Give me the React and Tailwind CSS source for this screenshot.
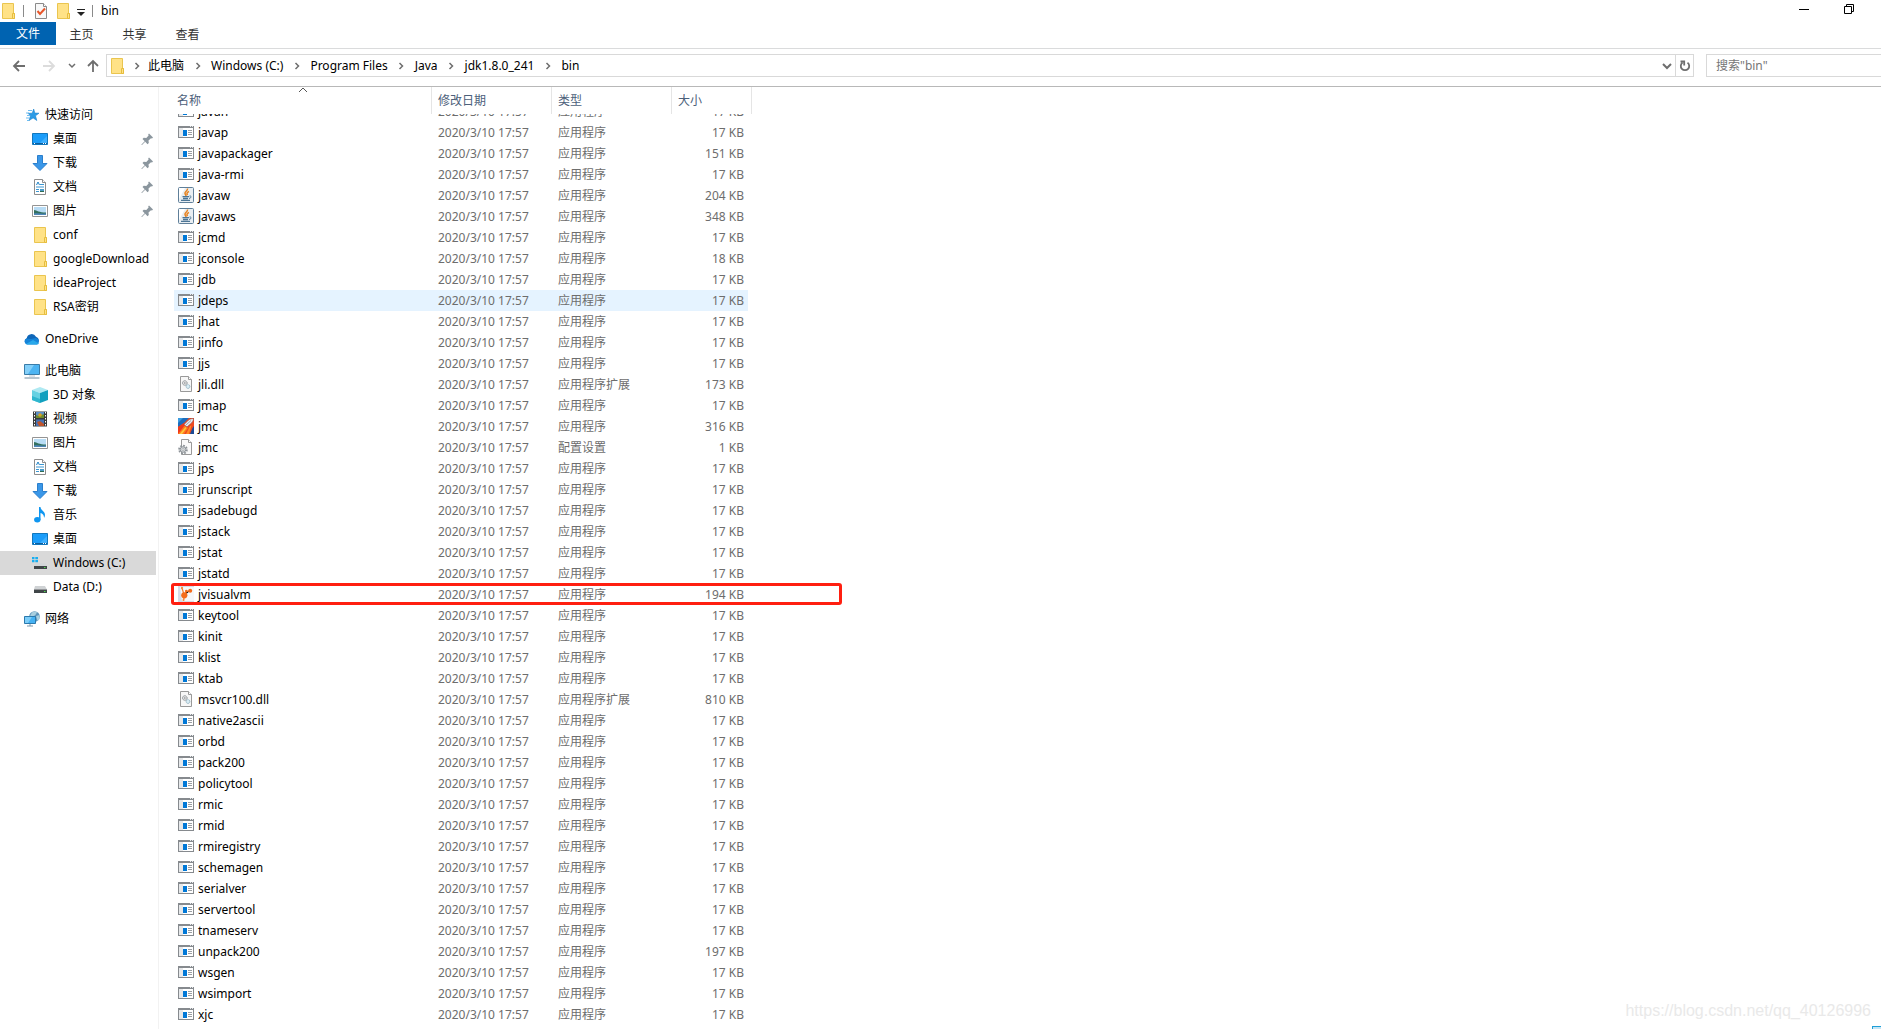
import { useState } from "react";
import clsx from "clsx";

const DATE = "2020/3/10 17:57";

const TYPES = {
  app: "应用程序",
  java: "应用程序",
  jmc: "应用程序",
  visualvm: "应用程序",
  dll: "应用程序扩展",
  config: "配置设置",
};

const files = [
  { name: "javah", icon: "app", size: 17, clipped: true },
  { name: "javap", icon: "app", size: 17 },
  { name: "javapackager", icon: "app", size: 151 },
  { name: "java-rmi", icon: "app", size: 17 },
  { name: "javaw", icon: "java", size: 204 },
  { name: "javaws", icon: "java", size: 348 },
  { name: "jcmd", icon: "app", size: 17 },
  { name: "jconsole", icon: "app", size: 18 },
  { name: "jdb", icon: "app", size: 17 },
  { name: "jdeps", icon: "app", size: 17, hovered: true },
  { name: "jhat", icon: "app", size: 17 },
  { name: "jinfo", icon: "app", size: 17 },
  { name: "jjs", icon: "app", size: 17 },
  { name: "jli.dll", icon: "dll", size: 173 },
  { name: "jmap", icon: "app", size: 17 },
  { name: "jmc", icon: "jmc", size: 316 },
  { name: "jmc", icon: "config", size: 1 },
  { name: "jps", icon: "app", size: 17 },
  { name: "jrunscript", icon: "app", size: 17 },
  { name: "jsadebugd", icon: "app", size: 17 },
  { name: "jstack", icon: "app", size: 17 },
  { name: "jstat", icon: "app", size: 17 },
  { name: "jstatd", icon: "app", size: 17 },
  { name: "jvisualvm", icon: "visualvm", size: 194, marked: true },
  { name: "keytool", icon: "app", size: 17 },
  { name: "kinit", icon: "app", size: 17 },
  { name: "klist", icon: "app", size: 17 },
  { name: "ktab", icon: "app", size: 17 },
  { name: "msvcr100.dll", icon: "dll", size: 810 },
  { name: "native2ascii", icon: "app", size: 17 },
  { name: "orbd", icon: "app", size: 17 },
  { name: "pack200", icon: "app", size: 17 },
  { name: "policytool", icon: "app", size: 17 },
  { name: "rmic", icon: "app", size: 17 },
  { name: "rmid", icon: "app", size: 17 },
  { name: "rmiregistry", icon: "app", size: 17 },
  { name: "schemagen", icon: "app", size: 17 },
  { name: "serialver", icon: "app", size: 17 },
  { name: "servertool", icon: "app", size: 17 },
  { name: "tnameserv", icon: "app", size: 17 },
  { name: "unpack200", icon: "app", size: 197 },
  { name: "wsgen", icon: "app", size: 17 },
  { name: "wsimport", icon: "app", size: 17 },
  { name: "xjc", icon: "app", size: 17 },
];

const navGroups = [
  {
    label: "快速访问",
    icon: "star",
    items: [
      { label: "桌面", icon: "desktop", pinned: true },
      { label: "下载", icon: "download", pinned: true },
      { label: "文档", icon: "document", pinned: true },
      { label: "图片", icon: "picture", pinned: true },
      { label: "conf", icon: "folder" },
      { label: "googleDownload", icon: "folder" },
      { label: "ideaProject", icon: "folder" },
      { label: "RSA密钥", icon: "folder" },
    ],
  },
  { label: "OneDrive", icon: "cloud", items: [] },
  {
    label: "此电脑",
    icon: "computer",
    items: [
      { label: "3D 对象", icon: "cube" },
      { label: "视频", icon: "video" },
      { label: "图片", icon: "picture" },
      { label: "文档", icon: "document" },
      { label: "下载", icon: "download" },
      { label: "音乐", icon: "music" },
      { label: "桌面", icon: "desktop" },
      { label: "Windows (C:)", icon: "systemDrive", selected: true },
      { label: "Data (D:)", icon: "drive" },
    ],
  },
  { label: "网络", icon: "network", items: [] },
];

const crumbs = [
  "此电脑",
  "Windows (C:)",
  "Program Files",
  "Java",
  "jdk1.8.0_241",
  "bin",
];

// All drawings are on a 16x16 grid
const drawings = {
  folder: (
    <>
      <path d="M2.5.5h11v10h1v5h-12z" fill="#ffe287" stroke="#eac54f" />
      <path d="M12.5 10.5h2v5h-2z" fill="#ffe287" stroke="#e6bd3e" />
    </>
  ),
  app: (
    <g shapeRendering="crispEdges">
      <path d="M0 2h16v12H0z" fill="#868a8e" />
      <path d="M1 4h14v9H1z" fill="#fff" />
      <path d="M1 4h4v9H1z" fill="#e6e8ea" />
      <path d="M5 6h4v6H5z" fill="#0078d7" />
      <path d="M10 6h4v1h-4zM10 8h4v1h-4zM10 10h4v1h-4z" fill="#9a9ea2" />
      <path d="M12 2h1v1h-1zM14 2h1v1h-1z" fill="#e6e8ea" />
    </g>
  ),
  java: (
    <>
      <rect x=".5" y=".5" width="15" height="15" rx="1" fill="#e9eef2" stroke="#5f7f99" />
      <path d="M1 1h6L1 12z" fill="#fff" />
      <path d="M9.500 1.500c.5 2.500-3 3-2.500 5 .2.900 1 1.500 1 2.500M11 4.500c-2 .9-2.700 1.900-1.400 3.500" fill="none" stroke="#e8821e" strokeWidth="1.500" />
      <path d="M4.500 9.700h6.500M5 11.500h5M3 13.400h9" stroke="#4c7595" strokeWidth="1.300" />
      <path d="M11.500 9c2-.4 2.400 1.800-.5 2.500" fill="none" stroke="#4c7595" />
    </>
  ),
  dll: (
    <>
      <path d="M2.500.5h8l3 3v12h-11z" fill="#f7f7f7" stroke="#999" />
      <path d="M10.500.5v3h3" fill="#fff" stroke="#999" />
      <circle cx="6.800" cy="7" r="2.300" fill="#e2e2e2" stroke="#858b90" strokeDasharray="1.200 .5" />
      <circle cx="6.800" cy="7" r=".8" fill="#858b90" />
      <circle cx="10" cy="10.500" r="1.900" fill="#d9edf5" stroke="#87a9b9" strokeDasharray="1 .5" />
    </>
  ),
  config: (
    <>
      <path d="M3.500.5h7l3 3v12h-10z" fill="#fafafa" stroke="#999" />
      <path d="M10.500.5v3h3" fill="#fff" stroke="#999" />
      <circle cx="5" cy="10.500" r="3.900" fill="none" stroke="#8e9499" strokeWidth="1.800" strokeDasharray="1.800 1.200" />
      <circle cx="5" cy="10.500" r="2.800" fill="#d5d8da" stroke="#8e9499" />
      <circle cx="5" cy="10.500" r="1" fill="#fff" stroke="#8e9499" strokeWidth=".6" />
    </>
  ),
  jmc: (
    <>
      <path d="M0 0h16v16H0z" fill="#ee4a1e" />
      <path d="M0 0h11L6 5 0 9z" fill="#1d6dbd" />
      <path d="M0 0h5L0 5z" fill="#3b9ce0" />
      <path d="M12 16l2.500-6L16 8v8z" fill="#1b4b96" />
      <path d="M0 9l6-4 2 2-8 9z" fill="#f0391c" />
      <path d="M0 16l7-9 3 3-4 6z" fill="#ff7a1c" />
      <path d="M1.500 16l6-7 1 1-4.500 6z" fill="#ffc93c" />
      <path d="M8 16l4-8 1.500-.5L11 16z" fill="#ff8a24" />
      <path d="M6 6.500L10.500 2C12 1 13.500.5 15.500.5 15.500 2 15 3.500 13.500 5L9 9z" fill="#e8ebef" stroke="#8b3b3b" strokeWidth=".6" />
      <path d="M8 7l5-4.500" stroke="#9aa5b3" />
    </>
  ),
  visualvm: (
    <>
      <path d="M0 0h16v16H0z" fill="#d5dde8" />
      <path d="M2 1h14v14H4z" fill="#f6f7f9" />
      <path d="M6.300 9.500L4 2M6.300 9.500l2-4 4-.8M6.300 10l-.8 4.500" stroke="#f47b2a" strokeWidth="1.200" />
      <circle cx="6.300" cy="9.300" r="3.100" fill="#f46c1b" />
      <circle cx="12.200" cy="4.800" r="2" fill="#f46c1b" />
      <circle cx="8.300" cy="5" r="1.300" fill="#f46c1b" />
      <circle cx="4" cy="2" r="1.200" fill="#f58b45" />
      <circle cx="5.500" cy="14" r="1" fill="#f58b45" />
    </>
  ),
  star: (
    <>
      <path d="M9.700 2l1.100 4.100 4.200.1-3.500 2.600 1.300 4.700-3.700-2.600-4.100 2.700 1.500-4.800L4 6.300l4.200-.1z" fill="#2b9be6" stroke="#1a83cf" strokeWidth=".6" />
      <path d="M4 3.500h4M2 6h3M3 8.500h3M2 11h3.500M3 13.500h2" stroke="#6cbcf0" />
    </>
  ),
  desktop: (
    <>
      <path d="M.5 2.500h15v11H.5z" fill="#1b9dfa" stroke="#1277bd" />
      <path d="M8 12L15 5v7z" fill="#3eb0ff" />
      <path d="M1 12.500h14" stroke="#0d5e9c" />
      <path d="M2 12.500h1M11 12.500h1M13 12.500h1" stroke="#fff" />
    </>
  ),
  download: (
    <path d="M5.500.5h5v8h4.500L8 15.500 1 8.500h4.500z" fill="#3a97e8" stroke="#2b7fcc" />
  ),
  document: (
    <>
      <path d="M2.500.5h8l3 3v12h-11z" fill="#fff" stroke="#8d8d8d" />
      <path d="M10.500.5v3h3" fill="#fff" stroke="#8d8d8d" />
      <path d="M4.500 6l1.500-3 1.500 3" fill="none" stroke="#2384c6" />
      <path d="M8 5.500h4M4 8h8M4 10.500h3M4 12.500h3" stroke="#3c97d2" />
      <path d="M8 10h4v3H8z" fill="#4c9cc9" />
      <path d="M8 12h4v1H8z" fill="#2f6b52" />
    </>
  ),
  picture: (
    <>
      <path d="M.5 2.500h15v11H.5z" fill="#fff" stroke="#949494" />
      <path d="M2 4h12v8H2z" fill="#b8dcf5" />
      <path d="M2 7c3 .5 5 2.500 12 2.500V12H2z" fill="#33705f" />
      <path d="M2 10.500c5-.5 8 .5 12 0V12H2z" fill="#4f86b9" />
    </>
  ),
  cloud: (
    <>
      <path d="M3 13a3 3 0 0 1-.3-5.700A5 5 0 0 1 12 5.700 4 4 0 0 1 13 13z" fill="#0f66b8" />
      <path d="M3 13.500A3.200 3.200 0 0 1 2.300 7.500L7 8l5-1a3.500 3.500 0 0 1 1 6.500z" fill="#1583d8" />
      <path d="M2 13l7-4 6 3.500c-.5.700-1.200 1-2 1H3z" fill="#28a8ea" />
    </>
  ),
  computer: (
    <>
      <path d="M.5 1.500h15v10H.5z" fill="#4cb4f2" stroke="#3a7ca8" />
      <path d="M1 2h9l-6 9H1z" fill="#83cff9" />
      <path d="M.5 15h15" stroke="#6f8ba0" />
      <path d="M5 13h6" stroke="#b9c7d1" />
    </>
  ),
  cube: (
    <>
      <path d="M8 0l8 3-8 3-8-3z" fill="#aee9f2" />
      <path d="M0 3l8 3v10l-8-3z" fill="#66d1e2" />
      <path d="M16 3L8 6v10l8-3z" fill="#12a0bf" />
      <path d="M0 9l8 3v4l-8-3z" fill="#2fb6ce" />
    </>
  ),
  video: (
    <>
      <path d="M1 .5h14v15H1z" fill="#3a3a3a" />
      <path d="M4 1h8v6H4z" fill="#5b8fc7" />
      <path d="M4 8.500h8V15H4z" fill="#4672b4" />
      <path d="M4 4l3 1 5-2v4H4z" fill="#6b8a2e" />
      <circle cx="8" cy="4" r="1.800" fill="#d8a21e" />
      <path d="M5 11l3-1 4 3v2H7z" fill="#c0542b" />
      <path d="M2.500 1v14M13.500 1v14" stroke="#fff" strokeDasharray="1.500 1.500" />
    </>
  ),
  music: (
    <>
      <path d="M7 0h1.500c.3 3.500 4.500 4 4.500 8 0 1.200-.4 2-1 3 .2-3-1.500-4.500-3.500-5v7H7z" fill="#0f96f0" />
      <ellipse cx="5.300" cy="12.800" rx="3.200" ry="2.700" fill="#0f96f0" />
    </>
  ),
  systemDrive: (
    <>
      <path d="M0 2h2.500v2.200H0zM3.300 2H6v2.200H3.300zM0 5h2.500v2.200H0zM3.300 5H6v2.200H3.300z" fill="#19aef0" />
      <path d="M3 8h10l2 3H2z" fill="#d3d6d8" />
      <path d="M2 11h13v3H2z" fill="#404548" />
      <path d="M12 12h1.500v1H12z" fill="#4be04b" />
    </>
  ),
  drive: (
    <>
      <path d="M3 7h10l2 3.500H2z" fill="#cfd2d4" />
      <path d="M2 10.500h13v3.500H2z" fill="#404548" />
      <path d="M12 12h1.500v1H12z" fill="#4be04b" />
    </>
  ),
  network: (
    <>
      <circle cx="10.500" cy="5.500" r="5.300" fill="#5d93b8" />
      <path d="M8 1.500c2-1.500 4-1 5 0l-2 3-3 1-2-1zM12 5l3.500-1v4l-2 2z" fill="#a9cfdf" />
      <path d="M.5 5.500h11v7H.5z" fill="#45b1f2" stroke="#2b79ad" />
      <path d="M1 6h7l-4 6H1z" fill="#7dcdf8" />
      <path d="M3 15h6M6 13v2" stroke="#7d98ab" />
    </>
  ),
  checked: (
    <>
      <path d="M2.500.5h8l3 3v12h-11z" fill="#f8f8f8" stroke="#8a8a8a" />
      <path d="M10.500.5v3h3" fill="#fff" stroke="#8a8a8a" />
      <path d="M4.500 8l2.500 3 5-5.500" fill="none" stroke="#e8562a" strokeWidth="2" />
    </>
  ),
  pin: (
    <path d="M10 2.500l4 4-1 1-1-.3-2.500 2.300.3 2.500-1.300 1.200-2.300-2.400L3 14H2.500v-.5l3.200-3.200L3.500 8l1.200-1.300 2.600.3L9.600 4.500 9.200 3.400z" fill="#8b969e" />
  ),
  back: (
    <path d="M14 8H3M8 3L3 8l5 5" fill="none" stroke="currentColor" strokeWidth="1.800" />
  ),
  forward: (
    <path d="M2 8h11M8 3l5 5-5 5" fill="none" stroke="currentColor" strokeWidth="1.800" />
  ),
  up: (
    <path d="M8 14V3M3 8l5-5 5 5" fill="none" stroke="currentColor" strokeWidth="1.800" />
  ),
  chevronDown: (
    <path d="M4 6l4 4 4-4" fill="none" stroke="currentColor" strokeWidth="2" />
  ),
  smallDown: (
    <path d="M5 6l3 3 3-3" fill="none" stroke="currentColor" strokeWidth="1.500" />
  ),
  chevronRight: (
    <path d="M6.500 5l3 3-3 3" fill="none" stroke="currentColor" strokeWidth="1.500" />
  ),
  refresh: (
    <path d="M10.500 4.600A4.200 4.200 0 1 1 5.500 4.600M3.500 3.500h3.700v4" fill="none" stroke="currentColor" strokeWidth="1.800" />
  ),
  customize: (
    <path d="M4 6h8v1H4zM4 9h8l-4 4z" fill="#222" />
  ),
  sort: <path d="M4 7l4-4 4 4" fill="none" stroke="#555" />,
  minimize: <path d="M3 8.500h10" stroke="#000" />,
  restore: (
    <path d="M3.500 5.500h7v7h-7zM5.500 5.500v-2h7v7h-2" fill="none" stroke="#000" />
  ),
};

const Icon = ({ name }) => (
  <svg viewBox="0 0 16 16" className="size-4 shrink-0" aria-hidden="true">
    {drawings[name]}
  </svg>
);

const TitleBar = () => (
  <header className="flex h-[22px] items-center">
    <Icon name="folder" />
    <span className="ml-[7px] h-3 w-px bg-[#8a8a8a]" />
    <button type="button" aria-label="属性" className="ml-[9px]">
      <Icon name="checked" />
    </button>
    <button type="button" aria-label="新建文件夹" className="ml-[6px]">
      <Icon name="folder" />
    </button>
    <button type="button" aria-label="自定义快速访问工具栏" className="ml-[2px]">
      <Icon name="customize" />
    </button>
    <span className="ml-[3px] h-3 w-px bg-[#8a8a8a]" />
    <h1 className="ml-2 flex-1">bin</h1>
    <div className="flex gap-[29px] pr-6 pb-1">
      <button type="button" aria-label="最小化">
        <Icon name="minimize" />
      </button>
      <button type="button" aria-label="还原">
        <Icon name="restore" />
      </button>
    </div>
  </header>
);

const RibbonTabs = () => (
  <nav className="flex h-[27px] border-b border-[#dadbdc] pb-[3px]">
    <button type="button" className="w-14 bg-[#0063b1] text-white">
      文件
    </button>
    {["主页", "共享", "查看"].map((tab) => (
      <button key={tab} type="button" className="w-[53px] pt-[2px] pr-[2px] text-[#333]">
        {tab}
      </button>
    ))}
  </nav>
);

const AddressBar = () => {
  const [query, setQuery] = useState("");

  return (
    <div className="flex h-[38px] items-center border-b border-[#b8b8b8] pt-px pb-[5px] text-[#6e6e6e]">
      <div className="flex w-[106px] items-center pl-[11px]">
        <button type="button" aria-label="后退">
          <Icon name="back" />
        </button>
        <button type="button" aria-label="前进" className="ml-[14px] text-[#dcdcdc]">
          <Icon name="forward" />
        </button>
        <button type="button" aria-label="最近浏览的位置" className="ml-[7px]">
          <Icon name="smallDown" />
        </button>
        <button type="button" aria-label="上移" className="ml-[5px]">
          <Icon name="up" />
        </button>
      </div>
      <div className="flex h-[23px] flex-1 items-center border border-[#d9d9d9] pl-[2px]">
        <Icon name="folder" />
        {crumbs.map((crumb, i) => (
          <div key={crumb} className="flex items-center">
            <span
              className={clsx(
                "flex justify-center",
                i === 0 ? "w-[23px]" : "w-[27px]",
              )}
            >
              <Icon name="chevronRight" />
            </span>
            <a href="#" className="text-black">
              {crumb}
            </a>
          </div>
        ))}
        <button type="button" aria-label="以前的位置" className="ml-auto">
          <Icon name="chevronDown" />
        </button>
        <button
          type="button"
          aria-label="刷新"
          className="flex h-full w-[18px] items-center justify-center border-l border-[#d9d9d9]"
        >
          <Icon name="refresh" />
        </button>
      </div>
      <input
        type="search"
        aria-label="搜索"
        value={query}
        onChange={(e) => setQuery(e.target.value)}
        placeholder={'搜索"bin"'}
        className="ml-3 h-[23px] w-[175px] border border-r-0 border-[#d9d9d9] px-[9px] text-black outline-none placeholder:text-[#767676]"
      />
    </div>
  );
};

const NavItem = ({ item, child }) => (
  <a
    href="#"
    className={clsx(
      "mr-[2px] flex h-6 items-center gap-[5px] whitespace-nowrap",
      child ? "pl-8" : "pl-6",
      item.selected && "bg-[#d9d9d9]",
    )}
  >
    <Icon name={item.icon} />
    <span>{item.label}</span>
    {item.pinned && (
      <span className="ml-auto pr-px">
        <Icon name="pin" />
      </span>
    )}
  </a>
);

const Sidebar = () => (
  <aside className="flex w-[159px] shrink-0 flex-col gap-2 border-r border-[#f2f2f2] pt-4">
    {navGroups.map((group) => (
      <div key={group.label}>
        <NavItem item={group} />
        {group.items.map((item) => (
          <NavItem key={item.label} item={item} child />
        ))}
      </div>
    ))}
  </aside>
);

// One table cell. The row scrolled under the header only shows its lower edge.
const Cell = ({ file, className, children }) => (
  <td className="relative p-0">
    <div
      className={clsx(
        "flex flex-col justify-end",
        file.clipped ? "h-2 overflow-hidden" : "h-[21px]",
        file.hovered && "bg-[#e5f3ff]",
        className,
      )}
    >
      <div className="h-[21px] shrink-0 leading-[21px]">{children}</div>
    </div>
  </td>
);

const FileRow = ({ file }) => (
  <tr className="text-[#6d6d6d]">
    <Cell file={file} className="pl-1 text-black">
      <div className="flex h-[21px] gap-1">
        <span className="pt-[2px]">
          <Icon name={file.icon} />
        </span>
        {file.name}
      </div>
      {file.marked && (
        <span className="pointer-events-none absolute -top-px -left-[3px] z-10 h-[22px] w-[671px] rounded-[3px] border-3 border-[#ff1f10]" />
      )}
    </Cell>
    <Cell file={file} className="pl-1.5">
      {DATE}
    </Cell>
    <Cell file={file} className="pl-1.5">
      {TYPES[file.icon]}
    </Cell>
    <Cell file={file} className="mr-1 pr-1 text-right">
      {file.size} KB
    </Cell>
  </tr>
);

const FileTable = () => (
  <table className="w-[578px] table-fixed border-separate border-spacing-0 text-left">
    <thead className="text-[#4c607a]">
      <tr className="h-[27px]">
        <th className="relative w-[258px] border-r border-[#e5e5e5] p-0 pl-[3px] font-normal">
          名称
          <span className="absolute inset-x-0 -top-[2px] flex justify-center">
            <Icon name="sort" />
          </span>
        </th>
        <th className="w-[120px] border-r border-[#e5e5e5] p-0 pl-1.5 font-normal">
          修改日期
        </th>
        <th className="w-[120px] border-r border-[#e5e5e5] p-0 pl-1.5 font-normal">
          类型
        </th>
        <th className="w-20 border-r border-[#e5e5e5] p-0 pl-1.5 font-normal">
          大小
        </th>
      </tr>
    </thead>
    <tbody>
      {files.map((file, i) => (
        <FileRow key={i} file={file} />
      ))}
    </tbody>
  </table>
);

const App = () => (
  <div className="relative flex h-screen flex-col overflow-hidden bg-white font-['Noto_Sans','Noto_Sans_CJK_SC',sans-serif] text-[12px] leading-4 text-black">
    <TitleBar />
    <RibbonTabs />
    <AddressBar />
    <div className="flex min-h-0 flex-1">
      <Sidebar />
      <main className="min-w-0 flex-1 overflow-hidden pl-[15px]">
        <FileTable />
      </main>
    </div>
    <p className="absolute right-[10px] bottom-2 font-['Liberation_Sans',sans-serif] text-[16px] leading-5 text-[#e9e9e9]">
      https://blog.csdn.net/qq_40126996
    </p>
    <span className="absolute right-0 bottom-0 h-[3px] w-[9px] border-t border-l border-[#1f9fd8] bg-[#c5e6f5]" />
  </div>
);

export default App;
